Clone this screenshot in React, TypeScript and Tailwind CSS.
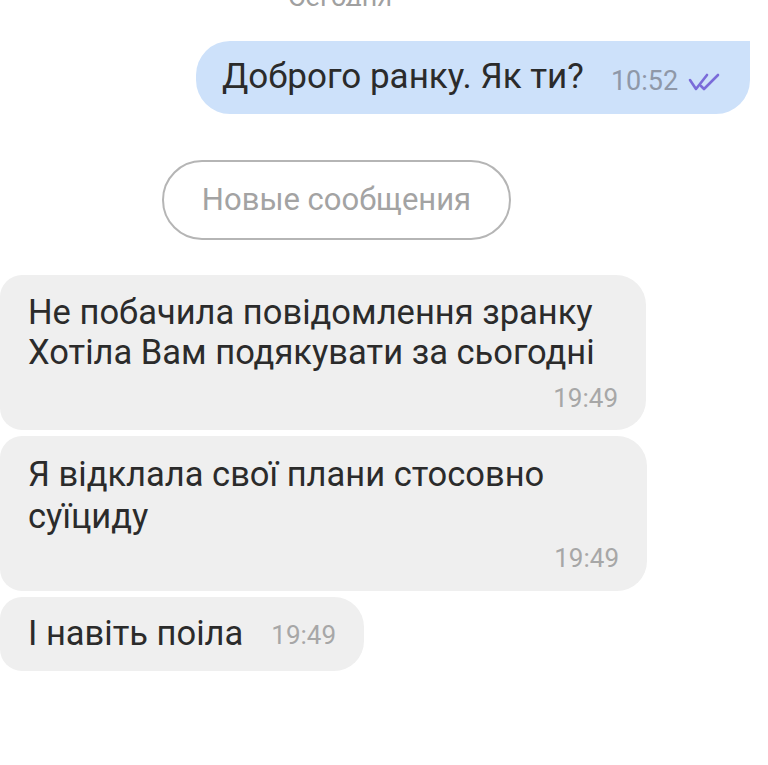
import React from 'react';

function DoubleCheck() {
  return (
    <svg width="34" height="20" viewBox="0 0 34 20" fill="none" className="ml-[10px] mt-[8px]">
      <path d="M2 8 L8 17 L19 3" stroke="#7a6bd9" strokeWidth="2.6" strokeLinecap="round" strokeLinejoin="round" />
      <path d="M13 14 L16 17 L30 3" stroke="#7a6bd9" strokeWidth="2.6" strokeLinecap="round" strokeLinejoin="round" />
    </svg>
  );
}

export default function App() {
  return (
    <div
      className="w-[768px] h-[765px] bg-white overflow-hidden flex flex-col"
      style={{ fontFamily: 'Roboto, "Noto Sans", sans-serif' }}
    >
      {/* дата вверху, обрезана */}
      <div className="h-[6px] overflow-hidden flex pl-[288px]">
        <div className="text-[27px] leading-none text-[#a0a0a0] -mt-[16px]">Сегодня</div>
      </div>

      {/* исходящее */}
      <div className="flex justify-end pr-[18px] mt-[35px]">
        <div className="w-[554px] h-[73px] bg-[#cde1fa] rounded-l-[34px] rounded-br-[34px] flex items-center pl-[26px]">
          <span className="text-[35px] text-[#2b2b2b]">Доброго ранку. Як ти?</span>
          <span className="text-[27px] text-[#8f98a8] ml-[27px] mt-[8px]">10:52</span>
          <DoubleCheck />
        </div>
      </div>

      {/* новые сообщения */}
      <div className="pl-[162px] mt-[46px]">
        <div className="w-[349px] h-[80px] border-2 border-[#b5b5b5] rounded-full flex items-center justify-center">
          <span className="text-[31px] text-[#a3a3a3]">Новые сообщения</span>
        </div>
      </div>

      {/* входящие */}
      <div className="flex flex-col gap-[6px] mt-[35px]">
        <div className="w-[646px] h-[155px] bg-[#efefef] rounded-r-[30px] rounded-l-[22px] pl-[28px] pr-[28px] pt-[17px] flex flex-col">
          <div className="text-[34.5px] leading-[40px] text-[#2b2b2b]">
            <div>Не побачила повідомлення зранку</div>
            <div>Хотіла Вам подякувати за сьогодні</div>
          </div>
          <div className="text-right text-[26px] leading-[30px] text-[#a7a7a7] mt-[11px]">19:49</div>
        </div>

        <div className="w-[647px] h-[155px] bg-[#efefef] rounded-r-[30px] rounded-l-[22px] pl-[28px] pr-[28px] pt-[17px] flex flex-col">
          <div className="text-[34.5px] leading-[42px] text-[#2b2b2b]">
            <div>Я відклала свої плани стосовно</div>
            <div>суїциду</div>
          </div>
          <div className="text-right text-[26px] leading-[30px] text-[#a7a7a7] mt-[6px]">19:49</div>
        </div>

        <div className="w-[364px] h-[74px] bg-[#efefef] rounded-r-[30px] rounded-l-[22px] pl-[28px] flex items-center">
          <span className="text-[34.5px] text-[#2b2b2b]">І навіть поіла</span>
          <span className="text-[26px] text-[#a7a7a7] ml-[28px] mt-[3px]">19:49</span>
        </div>
      </div>
    </div>
  );
}
